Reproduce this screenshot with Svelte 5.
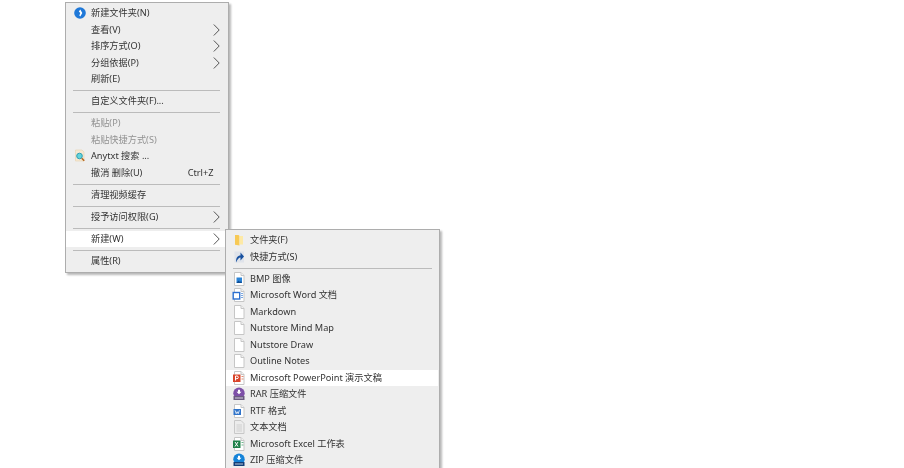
<script>
  const mainItems = [
    { label: '新建文件夹(N)', icon: 'newfolder' },
    { label: '查看(V)', arrow: true },
    { label: '排序方式(O)', arrow: true },
    { label: '分组依据(P)', arrow: true },
    { label: '刷新(E)' },
    { sep: true },
    { label: '自定义文件夹(F)...' },
    { sep: true },
    { label: '粘贴(P)', disabled: true },
    { label: '粘贴快捷方式(S)', disabled: true },
    { label: 'Anytxt 搜索 ...', icon: 'anytxt' },
    { label: '撤消 删除(U)', shortcut: 'Ctrl+Z' },
    { sep: true },
    { label: '清理视频缓存' },
    { sep: true },
    { label: '授予访问权限(G)', arrow: true },
    { sep: true },
    { label: '新建(W)', arrow: true, active: true },
    { sep: true },
    { label: '属性(R)' }
  ];

  const newItems = [
    { label: '文件夹(F)', icon: 'folder' },
    { label: '快捷方式(S)', icon: 'shortcut' },
    { sep: true },
    { label: 'BMP 图像', icon: 'bmp' },
    { label: 'Microsoft Word 文档', icon: 'word' },
    { label: 'Markdown', icon: 'blank' },
    { label: 'Nutstore Mind Map', icon: 'blank' },
    { label: 'Nutstore Draw', icon: 'blank' },
    { label: 'Outline Notes', icon: 'blank' },
    { label: 'Microsoft PowerPoint 演示文稿', icon: 'ppt', active: true },
    { label: 'RAR 压缩文件', icon: 'rar' },
    { label: 'RTF 格式', icon: 'rtf' },
    { label: '文本文档', icon: 'text' },
    { label: 'Microsoft Excel 工作表', icon: 'excel' },
    { label: 'ZIP 压缩文件', icon: 'zip' }
  ];
</script>

{#snippet page()}
  <path d="M2.500 .5h6.500l3 3v10h-9.500z" fill="#fff" stroke="#c6c6c6" />
  <path d="M9 .5v3h3" fill="#f2f2f2" stroke="#c6c6c6" />
{/snippet}

{#snippet icon(name)}
  <svg class="icon" viewBox="0 0 14 14" width="14" height="14" aria-hidden="true">
    {#if name === 'newfolder'}
      <circle cx="7" cy="7" r="5.800" fill="#1f78d8" />
      <path d="M7.300 3.500l2 3.500-2 3.500-1-1 1-2.500-1.500-1.500z" fill="#fff" />
    {:else if name === 'anytxt'}
      <path d="M2.500 1h6.500l2 2v9h-8.500z" fill="#f6e8d2" stroke="#e8d5b6" stroke-width=".7" />
      <circle cx="6.500" cy="7" r="2.800" fill="#63d4dc" stroke="#2f9fb2" />
      <path d="M8.700 9.200l2.500 2.500" stroke="#b5651d" stroke-width="1.500" />
    {:else if name === 'folder'}
      <path d="M3 2h3.500l1 1v9.500l-4.500-.8z" fill="#f7c955" />
      <path d="M7.500 3h3.500v8.500h-3.500z" fill="#fde9a6" />
    {:else if name === 'shortcut'}
      <path d="M2.500 1.500h9.500v11h-9.500z" fill="#dfe3ea" />
      <path d="M4 12.500c0-5 1.500-7 4.500-7v-3l3.500 4-3.500 4v-3c-1.500 0-3 1.500-4.500 5z" fill="#17509f" />
    {:else if name === 'bmp'}
      {@render page()}
      <rect x="4.500" y="5.500" width="5.500" height="5.500" fill="#2a83d6" />
      <path d="M4.500 11l2-2.500 1.500 1.500 1-1 1 2z" fill="#0e4c94" />
    {:else if name === 'word'}
      {@render page()}
      <rect x="1.200" y="4.500" width="6.500" height="6.500" fill="#fff" stroke="#2b6fd0" stroke-width="1.400" />
      <path d="M9 5.500h2M9 7.500h2M9 9.500h2" stroke="#7aa7e0" />
    {:else if name === 'blank'}
      {@render page()}
    {:else if name === 'ppt'}
      {@render page()}
      <rect x="1" y="3.500" width="7.500" height="7.500" fill="#d9442a" />
      <path d="M3.500 9.500v-4.500h1.500a1.300 1.300 0 0 1 0 2.700h-1.500" fill="none" stroke="#fff" />
      <path d="M9.500 5.500h2M9.500 8h2" stroke="#e38a70" />
    {:else if name === 'rar'}
      <circle cx="7" cy="6.300" r="5.700" fill="#7d4fa8" />
      <path d="M6 2.800h2v2h1.500l-2.500 2.500-2.500-2.500h1.500z" fill="#fff" />
      <rect x="1.500" y="9" width="11" height="4" fill="#6b5a80" />
      <path d="M3 11h8" stroke="#d5cee0" />
    {:else if name === 'rtf'}
      {@render page()}
      <rect x="1.500" y="5" width="7.500" height="6" fill="#2f73c9" />
      <path d="M3 6.300l1.200 3.400 1-2 1 2 1.200-3.400" fill="none" stroke="#fff" stroke-width=".8" />
    {:else if name === 'text'}
      <path d="M2.500 .5h6.500l3 3v10h-9.500z" fill="#ececec" stroke="#c8c8c8" />
      <path d="M4.500 5h5.500M4.500 7h5.500M4.500 9h5.500M4.500 11h5.500" stroke="#cfcfcf" />
    {:else if name === 'excel'}
      {@render page()}
      <rect x="1" y="3.500" width="7.500" height="7.500" fill="#1e8049" />
      <path d="M3 5l3 4.500M6 5l-3 4.500" stroke="#fff" />
      <path d="M9.500 5.500h2M9.500 8h2" stroke="#6fb58d" />
    {:else if name === 'zip'}
      <circle cx="7" cy="6.300" r="5.700" fill="#1382d8" />
      <path d="M6 2.800h2v2h1.500l-2.500 2.500-2.500-2.500h1.500z" fill="#fff" />
      <rect x="1.500" y="9" width="11" height="4" fill="#123f78" />
      <path d="M3 11h8" stroke="#b9c8da" />
    {/if}
  </svg>
{/snippet}

{#snippet row(item)}
  {#if item.sep}
    <div class="sep"></div>
  {:else}
    <div class="item" class:active={item.active} class:disabled={item.disabled}>
      <span class="slot">
        {#if item.icon}{@render icon(item.icon)}{/if}
      </span>
      <span class="label">{item.label}</span>
      {#if item.shortcut}<span class="shortcut">{item.shortcut}</span>{/if}
      {#if item.arrow}
        <svg class="arrow" viewBox="0 0 7 12" width="7" height="12" aria-hidden="true">
          <path d="M.8 .5l5.400 5.500-5.400 5.500" fill="none" stroke="#444" stroke-width=".9" />
        </svg>
      {/if}
    </div>
  {/if}
{/snippet}

<div class="desktop">
  <div class="menu main">
    {#each mainItems as item}
      {@render row(item)}
    {/each}
  </div>
  <div class="menu sub">
    {#each newItems as item}
      {@render row(item)}
    {/each}
  </div>
</div>

<style>
  :global(body) {
    background: #fff;
    overflow: hidden;
  }

  .desktop {
    position: relative;
    width: 904px;
    height: 468px;
    overflow: hidden;
    font-family: "Noto Sans", "Noto Sans CJK SC", sans-serif;
    font-size: 9.2px;
    color: #333;
    filter: blur(0.3px);
  }

  .menu {
    position: absolute;
    box-sizing: border-box;
    background: #eeeeee;
    border: 1px solid #adadad;
    box-shadow: 2px 2px 2px rgba(0, 0, 0, 0.28);
    padding: 2px 0;
  }

  .main {
    left: 65px;
    top: 2px;
    width: 163.500px;
    height: 271px;
    padding-top: 2px;
  }

  .sub {
    left: 225px;
    top: 229px;
    width: 215px;
    height: 260px;
    padding: 2px 1px 0 0;
  }

  .item {
    display: flex;
    align-items: center;
    height: 16.5px;
    line-height: 16.5px;
    white-space: nowrap;
  }

  .item.active {
    background: #fff;
  }

  .item.disabled {
    color: #929292;
  }

  .slot {
    flex: none;
    box-sizing: border-box;
    width: 25px;
    height: 14px;
    padding-left: 7px;
  }

  .sub .slot {
    width: 24px;
    padding-left: 6px;
  }

  .label {
    flex: 1;
  }

  .shortcut {
    margin-right: 14px;
  }

  .arrow {
    flex: none;
    margin-right: 8px;
  }

  .icon {
    display: block;
  }

  .sep {
    box-sizing: border-box;
    height: 5.5px;
    margin: 0 8px 0 7px;
    padding-top: 2.500px;
  }

  .sub .sep {
    margin-right: 6px;
  }

  .sep::before {
    content: "";
    display: block;
    height: 1px;
    background: #bbbbbb;
  }
</style>
